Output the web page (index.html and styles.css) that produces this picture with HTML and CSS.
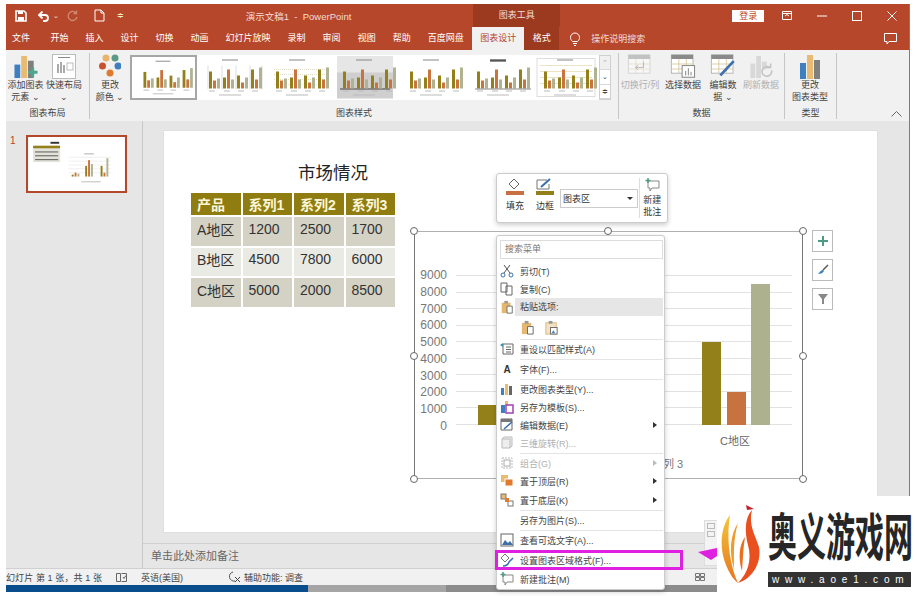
FILE: index.html
```html
<!DOCTYPE html>
<html lang="zh-CN">
<head>
  <meta charset="UTF-8">
  <title>演示文稿1 - PowerPoint</title>
  <link rel="stylesheet" href="styles.css">
</head>
<body>

  <!-- shared drawings -->
  <svg class="defs" width="0" height="0">
    <symbol id="bars" viewBox="0 0 67 44">
      <g fill="#94801a"><rect x="12" y="16" width="3" height="17"/><rect x="26" y="22" width="3" height="11"/><rect x="40" y="20" width="3" height="13"/><rect x="54" y="14" width="3" height="19"/></g>
      <g fill="#c9743f"><rect x="16" y="25" width="3" height="8"/><rect x="30" y="14" width="3" height="19"/><rect x="44" y="27" width="3" height="6"/><rect x="58" y="24" width="3" height="9"/></g>
      <g fill="#b0b391"><rect x="20" y="23" width="3" height="10"/><rect x="34" y="24" width="3" height="9"/><rect x="48" y="22" width="3" height="11"/><rect x="62" y="12" width="3" height="21"/></g>
      <rect x="25" y="4" width="16" height="1" fill="#888"/>
      <g fill="#bbb"><rect x="12" y="35" width="6" height="1"/><rect x="27" y="35" width="6" height="1"/><rect x="41" y="35" width="6" height="1"/><rect x="55" y="35" width="6" height="1"/><rect x="22" y="39" width="22" height="1"/></g>
    </symbol>
    <symbol id="clip" viewBox="0 0 16 16">
      <rect x="2" y="3" width="10" height="12" fill="#e4b871"/><rect x="5" y="1" width="4" height="3" fill="#999"/><path d="M8 7h6v8H8z" fill="#fff" stroke="#666"/>
    </symbol>
    <symbol id="grid-doc" viewBox="0 0 30 30">
      <rect x="1" y="1" width="26" height="22" fill="#fff" stroke="#aaa"/><rect x="1" y="1" width="26" height="5" fill="#8a8a8a"/>
      <path d="M1 12h26M1 18h26M10 6v17M19 6v17" stroke="#d8c79a" fill="none"/>
    </symbol>
  </svg>

  <div class="window">
    <div class="titlebar">
      <div class="qat">
        <svg width="12" height="12" viewBox="0 0 12 12"><path d="M1 1h8l2 2v8H1z" fill="none" stroke="#fff" stroke-width="1.6"/><rect x="3" y="1" width="5" height="3" fill="#fff"/><rect x="3" y="7" width="6" height="4" fill="#fff"/></svg>
        <svg class="undo" width="13" height="12" viewBox="0 0 13 12"><path d="M3 5h5a3 3 0 0 1 0 6H6M5.5 1.5 2 5l3.5 3.500" fill="none" stroke="#fff" stroke-width="1.8"/></svg>
        <span class="qat-caret">⌄</span>
        <svg class="redo" width="12" height="12" viewBox="0 0 12 12"><path d="M9 3a4.500 4.500 0 1 0 1 4M9.5 .5v3h-3" fill="none" stroke="#cf8a75" stroke-width="1.3"/></svg>
        <svg class="newdoc" width="11" height="13" viewBox="0 0 11 13"><path d="M1 1h6l3 3v8H1zM7 1v3h3" fill="none" stroke="#fff"/></svg>
        <span class="qat-more">≑</span>
      </div>
      <div class="doc-title">演示文稿1&nbsp; - &nbsp;PowerPoint</div>
      <div class="ctx-label">图表工具</div>
      <button class="login">登录</button>
      <div class="winbtn"><svg width="10" height="9" viewBox="0 0 10 9"><path d="M.5.5h9v8h-9zM.5 2.500h9M3 5l2-1.500L7 5" fill="none" stroke="#fff"/></svg></div>
      <div class="winbtn"><svg width="10" height="10" viewBox="0 0 10 10"><path d="M0 5h10" stroke="#fff"/></svg></div>
      <div class="winbtn"><svg width="10" height="10" viewBox="0 0 10 10"><rect x=".5" y=".5" width="9" height="9" fill="none" stroke="#fff"/></svg></div>
      <div class="winbtn"><svg width="10" height="10" viewBox="0 0 10 10"><path d="M.5.5l9 9M9.5.5l-9 9" stroke="#fff"/></svg></div>
    </div>

    <nav class="tabs">
      <a class="tab tab-file">文件</a>
      <a class="tab">开始</a><a class="tab">插入</a><a class="tab">设计</a><a class="tab">切换</a><a class="tab">动画</a>
      <a class="tab">幻灯片放映</a><a class="tab">录制</a><a class="tab">审阅</a><a class="tab">视图</a><a class="tab">帮助</a>
      <a class="tab">百度网盘</a>
      <a class="tab tab-active">图表设计</a>
      <a class="tab tab-ctx">格式</a>
      <svg class="bulb" width="12" height="14" viewBox="0 0 12 14"><path d="M3.5 9.5C2 8 1.5 7 1.5 5.500a4.500 4.500 0 0 1 9 0c0 1.500-.5 2.500-2 4zM4 11.500h4M5 13.500h2" fill="none" stroke="#fff"/></svg>
      <span class="tell">操作说明搜索</span>
      <svg class="comment" width="13" height="12" viewBox="0 0 13 12"><path d="M.5.5h12v8H5L3 11V8.500H.5z" fill="none" stroke="#fff"/></svg>
    </nav>

    <div class="ribbon">
      <section class="group group-layout">
        <div class="group-body">
          <div class="rb rb-add">
            <svg width="26" height="26" viewBox="0 0 26 26"><rect x="1" y="11" width="6" height="14" fill="#3f7fbf"/><rect x="8" y="2" width="6" height="23" fill="#e9bb72"/><rect x="15" y="7" width="6" height="18" fill="#7f7f7f"/><path d="M20 14v10M15 19h10" stroke="#4fa58e" stroke-width="3"/></svg>
            <span>添加图表<br>元素 ⌄</span>
          </div>
          <div class="rb rb-quick">
            <svg width="24" height="25" viewBox="0 0 24 25"><rect x=".5" y=".5" width="23" height="24" fill="#fff" stroke="#bbb"/><rect x="6" y="3" width="12" height="1" fill="#888"/><g fill="#aaa"><rect x="5" y="10" width="2" height="9"/><rect x="8" y="8" width="2" height="11"/><rect x="11" y="11" width="2" height="8"/></g><rect x="15" y="9" width="6" height="7" fill="none" stroke="#bbb"/></svg>
            <span>快速布局<br>⌄</span>
          </div>
        </div>
        <h4>图表布局</h4>
      </section>

      <section class="group group-styles">
        <div class="group-body">
          <div class="rb rb-color">
            <svg width="22" height="25" viewBox="0 0 22 25"><circle cx="7" cy="4" r="3.5" fill="#e8b36a"/><circle cx="16" cy="4" r="3.5" fill="#5a9a86"/><circle cx="3.5" cy="12" r="3.5" fill="#c9512f"/><circle cx="19" cy="12" r="3.5" fill="#3f7fbf"/><circle cx="11" cy="19" r="3.5" fill="#e07a2e"/></svg>
            <span>更改<br>颜色 ⌄</span>
          </div>
          <div class="gallery">
            <svg class="thumb thumb-on" viewBox="0 0 67 44"><use href="#bars"/></svg>
            <svg class="thumb" viewBox="0 0 67 44"><path d="M11 10v24M25 10v24M39 10v24M53 10v24M65 10v24" stroke="#ddd" fill="none"/><use href="#bars"/></svg>
            <svg class="thumb" viewBox="0 0 67 44"><path d="M10 14h56M10 19h56M10 24h56M10 29h56" stroke="#e4e0c8" stroke-dasharray="1 1" fill="none"/><use href="#bars"/></svg>
            <svg class="thumb" viewBox="0 0 67 44"><rect x="6" y="1" width="56" height="42" fill="#cfcfcf"/><rect x="6" y="1" width="56" height="16" fill="#e6e6e6"/><rect x="9" y="33" width="50" height="1" fill="#444"/><use href="#bars"/></svg>
            <svg class="thumb" viewBox="0 0 67 44"><use href="#bars"/></svg>
            <svg class="thumb" viewBox="0 0 67 44"><rect x="25" y="4" width="16" height="2" fill="#222"/><use href="#bars"/><rect x="10" y="33" width="56" height="1" fill="#888"/></svg>
            <svg class="thumb" viewBox="0 0 67 44"><rect x="5" y="3" width="58" height="38" fill="#fff" stroke="#ddd"/><path d="M8 10h52M8 16h52M8 22h52M8 28h52" stroke="#ece3c4" fill="none"/><use href="#bars"/></svg>
            <div class="gallery-scroll"><span class="off">⌃</span><span>⌄</span><span>≑</span></div>
          </div>
        </div>
        <h4>图表样式</h4>
      </section>

      <section class="group group-data">
        <div class="group-body">
          <div class="rb rb-dis rb-switch">
            <svg width="28" height="26" viewBox="0 0 30 28" opacity=".45"><use href="#grid-doc"/><path d="M10 15h9M13 12l-3 3 3 3M19 9v6" fill="none" stroke="#666"/></svg>
            <span>切换行/列</span>
          </div>
          <div class="rb rb-select">
            <svg width="28" height="26" viewBox="0 0 30 28"><use href="#grid-doc"/><rect x="14" y="13" width="14" height="13" fill="#fff" stroke="#777"/><path d="M18 24v-5M21 24v-8M24 24v-4" stroke="#777"/></svg>
            <span>选择数据</span>
          </div>
          <div class="rb rb-edit">
            <svg width="28" height="26" viewBox="0 0 30 28"><use href="#grid-doc"/><path d="M12 24 27 8" stroke="#3a6fb0" stroke-width="3"/></svg>
            <span>编辑数<br>据 ⌄</span>
          </div>
          <div class="rb rb-dis rb-refresh">
            <svg width="26" height="26" viewBox="0 0 26 26" opacity=".45"><rect x="2" y="10" width="5" height="15" fill="#bbb"/><rect x="8" y="2" width="5" height="23" fill="#bbb"/><rect x="14" y="8" width="5" height="8" fill="#bbb"/><path d="M24 17a5 5 0 1 1-2-3M23 10v4h-4" fill="none" stroke="#888" stroke-width="1.5"/></svg>
            <span>刷新数据</span>
          </div>
        </div>
        <h4>数据</h4>
      </section>

      <section class="group group-type">
        <div class="group-body">
          <div class="rb rb-type">
            <svg width="22" height="25" viewBox="0 0 22 25"><rect x="1" y="9" width="6" height="16" fill="#3f7fbf"/><rect x="8" y="1" width="6" height="24" fill="#e9bb72"/><rect x="15" y="6" width="6" height="19" fill="#7f7f7f"/></svg>
            <span>更改<br>图表类型</span>
          </div>
        </div>
        <h4>类型</h4>
      </section>

      <svg class="collapse" width="11" height="6" viewBox="0 0 11 6"><path d="M.5 5.500 5.500.5l5 5" fill="none" stroke="#666"/></svg>
    </div>

    <div class="workarea">
      <aside class="slides">
        <span class="slide-no">1</span>
        <svg class="slide-thumb" viewBox="0 0 100 56">
          <rect width="100" height="56" fill="#fff"/>
          <rect x="23" y="5" width="9" height="2" fill="#333"/>
          <rect x="5" y="9" width="28" height="3" fill="#94801a"/>
          <rect x="5" y="12" width="28" height="14" fill="#e4e3da"/>
          <g fill="#555"><rect x="7" y="15" width="24" height="1"/><rect x="7" y="19" width="24" height="1"/><rect x="7" y="23" width="24" height="1"/></g>
          <rect x="58" y="17" width="10" height="1" fill="#aaa"/>
          <path d="M42 21h44M42 25h44M42 29h44M42 33h44M42 37h44" stroke="#eee"/>
          <g fill="#94801a"><rect x="45" y="39" width="2" height="2"/><rect x="59" y="30" width="2" height="11"/><rect x="75" y="30" width="2" height="11"/></g>
          <g fill="#c9743f"><rect x="48" y="37" width="2" height="4"/><rect x="62" y="24" width="2" height="17"/><rect x="78" y="37" width="2" height="4"/></g>
          <g fill="#b0b391"><rect x="51" y="38" width="2" height="3"/><rect x="65" y="28" width="2" height="13"/><rect x="81" y="22" width="2" height="19"/></g>
          <rect x="55" y="46" width="20" height="1" fill="#bbb"/>
        </svg>
      </aside>

      <div class="stage">
        <div class="canvas">
          <div class="slide">
            <h2 class="slide-title">市场情况</h2>
            <table class="data-table">
              <tr><th>产品</th><th>系列1</th><th>系列2</th><th>系列3</th></tr>
              <tr class="odd"><td>A地区</td><td>1200</td><td>2500</td><td>1700</td></tr>
              <tr class="even"><td>B地区</td><td>4500</td><td>7800</td><td>6000</td></tr>
              <tr class="odd"><td>C地区</td><td>5000</td><td>2000</td><td>8500</td></tr>
            </table>

            <div class="chart">
              <div class="axis"><span>9000</span><span>8000</span><span>7000</span><span>6000</span><span>5000</span><span>4000</span><span>3000</span><span>2000</span><span>1000</span><span>0</span></div>
              <div class="plot">
                <div class="gridlines"><i></i><i></i><i></i><i></i><i></i><i></i><i></i><i></i><i></i><i></i></div>
                <div class="clusters">
                  <div class="cluster"><b class="s1" style="height:20px"></b><b class="s2" style="height:41px"></b><b class="s3" style="height:28px"></b></div>
                  <div class="cluster"><b class="s1" style="height:75px"></b><b class="s2" style="height:129px"></b><b class="s3" style="height:99px"></b></div>
                  <div class="cluster"><b class="s1" style="height:83px"></b><b class="s2" style="height:33px"></b><b class="s3" style="height:141px"></b></div>
                </div>
              </div>
              <span class="cat-label">C地区</span>
              <span class="legend">系列 3</span>
              <i class="handle h-tl"></i><i class="handle h-tc"></i><i class="handle h-tr"></i>
              <i class="handle h-ml"></i><i class="handle h-mr"></i>
              <i class="handle h-bl"></i><i class="handle h-bc"></i><i class="handle h-br"></i>
            </div>

            <div class="chart-tools">
              <div class="chart-tool"><svg width="12" height="12" viewBox="0 0 12 12"><path d="M6 1v10M1 6h10" stroke="#4f9a85" stroke-width="2"/></svg></div>
              <div class="chart-tool"><svg width="12" height="12" viewBox="0 0 12 12"><path d="M11 1 6 6" stroke="#555" stroke-width="1.5"/><path d="M6 6c-2 0-3 2-5 4 3 0 5-1 6-3z" fill="#3f7fbf"/></svg></div>
              <div class="chart-tool"><svg width="12" height="12" viewBox="0 0 12 12"><path d="M1 1h10L7 6v5H5V6z" fill="#888"/></svg></div>
            </div>
          </div>
        </div>
        <div class="notes">单击此处添加备注</div>
      </div>
    </div>

    <footer class="status">
      <span class="st-page">幻灯片 第 1 张，共 1 张</span>
      <svg class="st-icon" width="11" height="9" viewBox="0 0 11 9"><path d="M.5.5h4v8h-4zM5.5.5h5v8h-5M7 4l1 1.500L10 2.500" fill="none" stroke="#666"/></svg>
      <span class="st-lang">英语(美国)</span>
      <svg class="st-access" width="13" height="12" viewBox="0 0 13 12"><path d="M5 1a4.500 4.500 0 1 0 2 9" fill="none" stroke="#555"/><path d="M7 6l5 5M12 6l-5 5" stroke="#444"/></svg>
      <span>辅助功能: 调查</span>
      <svg class="st-view" width="10" height="8" viewBox="0 0 10 8"><path d="M.5.5h4v3h-4zM5.5.5h4v3h-4zM.5 4.500h4v3h-4zM5.500 4.500h4v3h-4z" fill="none" stroke="#777"/></svg>
    </footer>
    <div class="taskbar"></div>
  </div>

  <!-- mini toolbar -->
  <div class="mini">
    <div class="mini-btn">
      <svg width="18" height="18" viewBox="0 0 18 18"><path d="M8 1 3 6l5 5 5-5z" fill="#fff" stroke="#666"/><rect x="0" y="13" width="18" height="4" fill="#c8703f"/></svg>
      <span>填充</span>
    </div>
    <div class="mini-btn">
      <svg width="18" height="18" viewBox="0 0 18 18"><path d="M1 2h10M1 2v9h12V6" fill="none" stroke="#777"/><path d="M5 9 14 1" stroke="#3a6fb0" stroke-width="2"/><rect x="0" y="13" width="18" height="4" fill="#94801a"/></svg>
      <span>边框</span>
    </div>
    <div class="mini-combo"><span>图表区</span><i></i></div>
    <div class="mini-new">
      <svg width="15" height="14" viewBox="0 0 15 14"><path d="M3 3h11v7H7l-2 3v-3H3z" fill="#fff" stroke="#888"/><path d="M3 0v5M.5 2.500h5" stroke="#4f9a85" stroke-width="1.5"/></svg>
      <span>新建<br>批注</span>
    </div>
  </div>

  <!-- context menu -->
  <div class="menu">
    <div class="menu-search">搜索菜单</div>
    <div class="item"><svg width="14" height="14" viewBox="0 0 14 14"><path d="M4 1l6 8M10 1 4 9" stroke="#555"/><circle cx="3" cy="11" r="2" fill="none" stroke="#3f6fa8"/><circle cx="11" cy="11" r="2" fill="none" stroke="#3f6fa8"/></svg><span>剪切(T)</span></div>
    <div class="item"><svg width="14" height="14" viewBox="0 0 14 14"><path d="M1 1h6v9H1zM6 4h6v9H6z" fill="#fff" stroke="#666"/></svg><span>复制(C)</span></div>
    <div class="item item-head"><svg width="14" height="16" viewBox="0 0 16 16"><use href="#clip"/></svg><span>粘贴选项:</span></div>
    <div class="paste-row">
      <svg width="15" height="15" viewBox="0 0 16 16"><use href="#clip"/></svg>
      <svg width="15" height="15" viewBox="0 0 16 16"><rect x="2" y="3" width="11" height="12" fill="#f3e3c4" stroke="#d8b878"/><rect x="5" y="1" width="4" height="3" fill="#999"/><rect x="7" y="8" width="7" height="7" fill="#fff" stroke="#666"/><path d="M8 14l2-3 2 3" fill="#3f7fbf"/></svg>
    </div>
    <div class="sep"></div>
    <div class="item"><svg width="14" height="14" viewBox="0 0 14 14"><path d="M3 2h10v10H3zM6 5h5M6 7.500h5M6 10h5" fill="#fff" stroke="#666"/><path d="M0 3l3-2v4z" fill="#3f8fa8"/></svg><span>重设以匹配样式(A)</span></div>
    <div class="sep"></div>
    <div class="item"><span class="glyph">A</span><span>字体(F)...</span></div>
    <div class="sep"></div>
    <div class="item"><svg width="14" height="14" viewBox="0 0 14 14"><rect x="1" y="6" width="3" height="7" fill="#3f7fbf"/><rect x="5" y="2" width="3" height="11" fill="#e9bb72"/><rect x="9" y="4" width="3" height="9" fill="#666"/></svg><span>更改图表类型(Y)...</span></div>
    <div class="item"><svg width="14" height="14" viewBox="0 0 14 14"><rect x="1" y="5" width="4" height="8" fill="#3f7fbf"/><rect x="5" y="1" width="3" height="4" fill="#e9bb72"/><rect x="6" y="5" width="7" height="8" fill="#fff" stroke="#a040b0" stroke-width="1.5"/></svg><span>另存为模板(S)...</span></div>
    <div class="item has-sub"><svg width="14" height="14" viewBox="0 0 14 14"><path d="M1 1h11v11H1z" fill="#fff" stroke="#666"/><rect x="1" y="1" width="11" height="3" fill="#777"/><path d="M4 11l8-7" stroke="#3a6fb0" stroke-width="1.5"/></svg><span>编辑数据(E)</span></div>
    <div class="item item-off"><svg width="14" height="14" viewBox="0 0 14 14"><path d="M2 3h8v9H2zM2 3l2-2h8v9l-2 2" fill="#eee" stroke="#bbb"/></svg><span>三维旋转(R)...</span></div>
    <div class="sep"></div>
    <div class="item item-off has-sub"><svg width="14" height="14" viewBox="0 0 14 14"><path d="M2 2h10v10H2z" fill="none" stroke="#bbb" stroke-dasharray="2 1"/><rect x="4" y="4" width="6" height="6" fill="none" stroke="#aaa"/></svg><span>组合(G)</span></div>
    <div class="item has-sub"><svg width="14" height="14" viewBox="0 0 14 14"><rect x="1" y="1" width="7" height="7" fill="#e9bb72"/><rect x="5" y="5" width="8" height="7" fill="#e07a2e" stroke="#fff"/></svg><span>置于顶层(R)</span></div>
    <div class="item item-gap has-sub"><svg width="14" height="14" viewBox="0 0 14 14"><rect x="1" y="1" width="5" height="5" fill="#e9bb72" stroke="#777"/><rect x="8" y="8" width="5" height="5" fill="#fff" stroke="#777"/><rect x="5" y="5" width="4" height="4" fill="#e07a2e"/></svg><span>置于底层(K)</span></div>
    <div class="sep"></div>
    <div class="item"><span class="no-icon"></span><span>另存为图片(S)...</span></div>
    <div class="sep"></div>
    <div class="item"><svg width="14" height="14" viewBox="0 0 14 14"><rect x="1" y="1" width="12" height="12" fill="#fff" stroke="#666"/><path d="M2 12l3-5 3 3 2-2 3 4z" fill="#3f6fa8"/></svg><span>查看可选文字(A)...</span></div>
    <div class="sep"></div>
    <div class="item"><svg width="14" height="14" viewBox="0 0 14 14"><path d="M5 1 1 5l4 4 4-4z" fill="#fff" stroke="#777"/><path d="M3 13c3 0 5-1 6-4l4-4" fill="none" stroke="#3a6fb0" stroke-width="1.5"/></svg><span>设置图表区域格式(F)...</span></div>
    <div class="item item-last"><svg width="14" height="14" viewBox="0 0 14 14"><path d="M3 3h10v7H7l-2 3v-3H3z" fill="#fff" stroke="#888"/><path d="M3 0v5M.5 2.500h5" stroke="#4f9a85" stroke-width="1.5"/></svg><span>新建批注(M)</span></div>
  </div>
  <div class="highlight"></div>

  <!-- view buttons and arrow over the bottom right corner -->
  <div class="view-btns"><i></i><i></i></div>
  <svg class="arrow" width="20" height="14" viewBox="0 0 20 14"><path d="M0 5 19 1v8l-6 4z" fill="#e020e0"/></svg>

  <!-- site watermark -->
  <div class="watermark">
    <svg class="wm-logo" width="42" height="82" viewBox="0 0 42 82">
      <defs><linearGradient id="flame" x1="0" y1="0" x2="0" y2="1"><stop offset="0" stop-color="#f2c53a"/><stop offset="1" stop-color="#e8741f"/></linearGradient></defs>
      <path d="M32 5C28 20 36 32 39 42 42 58 32 74 18 78 28 68 32 55 28 40 25 28 24 14 32 5z" fill="#e8501f"/>
      <path d="M26 0l8 4-7 1z" fill="#c8202a"/>
      <path d="M10 10C2 20-2 40 6 60 10 70 14 75 18 78 10 60 6 35 10 10z" fill="url(#flame)"/>
      <path d="M18 18C10 30 9 48 14 64 14 50 13 34 18 18z" fill="#ef9a2c"/>
      <path d="M25 32C19 40 18 54 22 66 23 54 23 44 25 32z" fill="#e8701f"/>
    </svg>
    <div class="wm-text">
      <div class="wm-name">奥义游戏网</div>
      <div class="wm-url">www.aoe1.com</div>
    </div>
  </div>

</body>
</html>
```

FILE: styles.css
```css
* {
  margin: 0;
  padding: 0;
  box-sizing: border-box;
}

body {
  width: 917px;
  height: 596px;
  overflow: hidden;
  background-color: #fff;
  font-family: "Liberation Sans", "Noto Sans CJK SC", sans-serif;
  font-size: 9px;
  color: #444;
}

.defs {
  position: absolute;
}

.window {
  width: 904px;
  height: 588px;
  margin: 4px 0 0 6px;
  display: flex;
  flex-direction: column;
  background-color: #e6e6e6;
  border-right: 1px solid #c9604a;
}

/* title bar */
.titlebar {
  height: 23px;
  flex: none;
  display: flex;
  align-items: center;
  background-color: #b7472a;
  color: #f3dcd5;
}

.qat {
  width: 228px;
  height: 23px;
  display: flex;
  align-items: center;
  padding-left: 9px;
  color: #eec;
}

.undo { margin-left: 10px; }
.qat-caret { margin-left: 3px; font-size: 7px; line-height: 7px; }
.redo { margin-left: 8px; }
.newdoc { margin-left: 15px; }
.qat-more { margin-left: 12px; font-size: 8px; }

.doc-title {
  width: 130px;
  text-align: center;
  font-size: 9.5px;
  white-space: nowrap;
}

.ctx-label {
  width: 87px;
  height: 23px;
  margin-left: 110px;
  line-height: 22px;
  text-align: center;
  background-color: #9c3a20;
}

.login {
  width: 32px;
  height: 12px;
  margin-left: 172px;
  margin-right: 5px;
  border: none;
  background-color: #fff;
  color: #b7472a;
  font: 9px "Noto Sans CJK SC", sans-serif;
  line-height: 12px;
}

.winbtn {
  width: 35px;
  height: 23px;
  display: flex;
  align-items: center;
  justify-content: center;
}

/* tabs */
.tabs {
  height: 23px;
  flex: none;
  display: flex;
  align-items: center;
  background-color: #b7472a;
  color: #fff;
}

.tab {
  height: 23px;
  padding: 0 8.5px;
  line-height: 22px;
  white-space: nowrap;
}

.tab-file {
  width: 30px;
  padding: 0;
  margin-right: 6px;
  text-align: center;
}

.tab-active {
  width: 52px;
  padding: 0;
  text-align: center;
  background-color: #f1f1f1;
  color: #b7472a;
}

.tab-ctx {
  width: 35px;
  padding: 0;
  text-align: center;
  background-color: #9c3a20;
}

.bulb { margin-left: 10px; }

.tell {
  margin-left: 10px;
  color: #f3dcd5;
}

.comment { margin-left: auto; margin-right: 12px; }

/* ribbon */
.ribbon {
  height: 71px;
  flex: none;
  display: flex;
  position: relative;
  background-color: #f1f1f1;
  color: #444;
}

.group {
  display: flex;
  flex-direction: column;
  border-right: 1px solid #c6c6c6;
  margin: 3px 0 2px;
}

.group-layout { width: 84px; }
.group-styles { width: 529px; }
.group-data { width: 166px; }
.group-type { width: 52px; }

.group-body {
  height: 54px;
  display: flex;
}

.group h4 {
  flex: 1;
  text-align: center;
  font-size: 9px;
  font-weight: normal;
  line-height: 12px;
}

.rb {
  display: flex;
  flex-direction: column;
  align-items: center;
  text-align: center;
  line-height: 11.5px;
  white-space: nowrap;
}

.rb svg {
  height: 25px;
  flex: none;
  margin-top: 1px;
}

.rb span { margin-top: 1px; }
.rb-add { width: 39px; }
.rb-quick { width: 38px; }
.rb-color { width: 30px; margin: 0 5px; }
.rb-switch { width: 42px; }
.rb-select { width: 40px; margin-left: 2px; }
.rb-edit { width: 40px; }
.rb-refresh { width: 36px; }
.rb-type { width: 50px; }
.rb-dis { color: #b0b0b0; }

.gallery {
  display: flex;
  height: 45px;
  margin-top: 2px;
}

.thumb {
  width: 67px;
  height: 45px;
  display: block;
  background-color: #fff;
}

.thumb-on { border: 2px solid #a6a6a6; }

.gallery-scroll {
  width: 12px;
  display: flex;
  flex-direction: column;
  border: 1px solid #d0d0d0;
  background-color: #fff;
}

.gallery-scroll span {
  flex: 1;
  font-size: 7px;
  line-height: 13px;
  text-align: center;
  border-bottom: 1px solid #d8d8d8;
}

.gallery-scroll .off {
  color: #aaa;
  background-color: #f0f0f0;
}

.collapse {
  position: absolute;
  right: 7px;
  bottom: 4px;
}

/* work area */
.workarea {
  flex: 1;
  min-height: 0;
  display: flex;
}

.slides {
  width: 137px;
  flex: none;
  display: flex;
  align-items: flex-start;
  border-right: 1px solid #c8c8c8;
  padding-top: 14px;
}

.slide-no {
  width: 20px;
  padding-left: 4px;
  font-size: 10px;
  line-height: 11px;
  color: #b7472a;
}

.slide-thumb {
  width: 101px;
  height: 58px;
  border: 2px solid #b7472a;
}

.stage {
  flex: 1;
  display: flex;
  flex-direction: column;
}

.canvas {
  flex: 1;
  padding: 10px 32px 11px 21px;
  border-bottom: 1px solid #d0d0d0;
}

.slide {
  position: relative;
  width: 713px;
  height: 401px;
  background-color: #fff;
  box-shadow: 0 0 1px #bbb;
}

.slide-title {
  position: absolute;
  left: 134px;
  top: 30px;
  font-size: 17.5px;
  line-height: 24px;
  font-weight: normal;
  color: #222;
}

.data-table {
  position: absolute;
  left: 25px;
  top: 60px;
  width: 208px;
  table-layout: fixed;
  border-collapse: collapse;
  font-size: 14px;
  color: #333;
}

.data-table th,
.data-table td {
  border: 2px solid #fff;
  padding: 0 0 0 6px;
  text-align: left;
}

.data-table th {
  height: 24px;
  background-color: #8f7d12;
  color: #fdf7d8;
  font-weight: bold;
}

.data-table td {
  height: 30.5px;
  padding-bottom: 5px;
}

.odd td { background-color: #d3d2c5; }
.even td { background-color: #eaeae4; }

/* chart */
.chart {
  position: absolute;
  left: 250px;
  top: 100px;
  width: 389px;
  height: 248px;
  border: 1px solid #b0b0b0;
  border-left-color: #777;
  border-right-color: #777;
}

.axis {
  position: absolute;
  left: 4px;
  top: 36px;
  width: 28px;
  height: 165px;
  display: flex;
  flex-direction: column;
  justify-content: space-between;
  text-align: right;
  font-size: 12px;
  line-height: 14px;
  color: #777;
}

.plot {
  position: absolute;
  left: 41px;
  top: 43px;
  width: 336px;
  height: 150px;
}

.gridlines {
  position: absolute;
  inset: 0;
  display: flex;
  flex-direction: column;
  justify-content: space-between;
}

.gridlines i {
  display: block;
  height: 1px;
  background-color: #e2e2e2;
}

.clusters {
  position: absolute;
  inset: 0;
  display: flex;
}

.cluster {
  flex: 1;
  display: flex;
  align-items: flex-end;
  justify-content: center;
  gap: 5.5px;
}

.cluster b {
  width: 19px;
  display: block;
}

.s1 { background-color: #94801a; }
.s2 { background-color: #c8733f; }
.s3 { background-color: #aeb18e; }

.cat-label {
  position: absolute;
  left: 305px;
  top: 202px;
  font-size: 11px;
  line-height: 14px;
  color: #666;
}

.legend {
  position: absolute;
  left: 237px;
  top: 225px;
  font-size: 11px;
  line-height: 14px;
  color: #777;
}

.handle {
  position: absolute;
  width: 8px;
  height: 8px;
  border: 1.5px solid #666;
  border-radius: 50%;
  background-color: #fff;
}

.h-tl { left: -5px; top: -5px; }
.h-tc { left: 189px; top: -5px; }
.h-tr { right: -5px; top: -5px; }
.h-ml { left: -5px; top: 120px; }
.h-mr { right: -5px; top: 120px; }
.h-bl { left: -5px; bottom: -5px; }
.h-bc { left: 189px; bottom: -5px; }
.h-br { right: -5px; bottom: -5px; }

.chart-tools {
  position: absolute;
  left: 648px;
  top: 99px;
  display: flex;
  flex-direction: column;
  gap: 7px;
}

.chart-tool {
  width: 21px;
  height: 22px;
  display: flex;
  align-items: center;
  justify-content: center;
  background-color: #fff;
  border: 1px solid #bbb;
}

.notes {
  height: 25px;
  flex: none;
  padding-left: 8px;
  font-size: 11px;
  line-height: 24px;
  color: #666;
}

/* status bar */
.status {
  height: 17px;
  flex: none;
  display: flex;
  align-items: center;
  background-color: #f1f1f1;
  border-top: 1px solid #d0d0d0;
  color: #444;
  white-space: nowrap;
}

.st-page { width: 110px; letter-spacing: .1px; }
.st-icon { margin-right: 14px; }
.st-lang { width: 49px; }
.st-access { margin: 0 3px 0 38px; }
.st-view { margin-left: 392px; }

.taskbar {
  height: 7px;
  flex: none;
  background: linear-gradient(to right, #0a4d8c 302px, #a5a5a5 302px, #a5a5a5 440px, #8c8c8c 440px);
}

/* mini toolbar */
.mini {
  position: absolute;
  left: 496px;
  top: 173px;
  width: 172px;
  height: 50px;
  display: flex;
  align-items: flex-start;
  padding: 4px 3px 0 9px;
  background-color: #fff;
  border: 1px solid #ccc;
  border-radius: 3px;
  box-shadow: 0 2px 5px rgba(0, 0, 0, 0.2);
  color: #333;
}

.mini-btn {
  width: 30px;
  flex: none;
  display: flex;
  flex-direction: column;
  align-items: flex-start;
  gap: 3px;
}

.mini-combo {
  width: 82px;
  height: 19px;
  margin: 11px 0 0 -6px;
  display: flex;
  align-items: center;
  justify-content: space-between;
  padding: 0 4px 0 2px;
  background-color: #fff;
  border: 1px solid #ccc;
}

.mini-combo i {
  border: 3px solid transparent;
  border-top: 3px solid #333;
  margin-top: 3px;
}

.mini-new {
  width: 26px;
  margin-left: 1px;
  display: flex;
  flex-direction: column;
  align-items: center;
  gap: 2px;
  line-height: 12px;
  text-align: center;
  border-left: 1px solid #ddd;
}

/* context menu */
.menu {
  position: absolute;
  left: 496px;
  top: 235px;
  width: 169px;
  height: 355px;
  padding: 4px 1px 0 3px;
  background-color: #fff;
  border: 1px solid #ccc;
  border-radius: 3px;
  box-shadow: 0 2px 5px rgba(0, 0, 0, 0.2);
  color: #444;
}

.menu-search {
  height: 19px;
  margin-bottom: 3px;
  padding-left: 4px;
  line-height: 17px;
  border: 1px solid #ddd;
  color: #777;
}

.item {
  height: 18px;
  display: flex;
  align-items: center;
  position: relative;
  white-space: nowrap;
}

.item svg,
.item .glyph,
.item .no-icon {
  width: 14px;
  margin-right: 6px;
  flex: none;
}

.glyph {
  text-align: center;
  font-size: 10px;
  font-weight: bold;
  color: #333;
}

.item-head span {
  align-self: stretch;
  flex: 1;
  line-height: 18px;
  margin-left: -5px;
  padding-left: 5px;
  background-color: #e6e6e6;
}

.item-off { color: #b0b0b0; }
.item-gap { margin-top: 1px; }
.item-last { margin-top: 1px; }

.has-sub::after {
  content: "";
  position: absolute;
  right: 6px;
  top: 6px;
  border: 3.5px solid transparent;
  border-left: 4px solid #333;
  border-right: 0;
}

.item-off.has-sub::after { border-left-color: #bbb; }

.paste-row {
  height: 22px;
  display: flex;
  align-items: center;
  gap: 9px;
  padding-left: 20px;
}

.sep {
  height: 2px;
  margin-left: 20px;
  border-bottom: 1px solid #e4e4e4;
}

.highlight {
  position: absolute;
  left: 495px;
  top: 550px;
  width: 188px;
  height: 20px;
  border: 3px solid #e020e0;
}

.view-btns {
  position: absolute;
  left: 704px;
  top: 520px;
  width: 13px;
  height: 46px;
  background-color: #f3f3f3;
  border: 1px solid #ddd;
  border-right: none;
  display: flex;
  flex-direction: column;
  gap: 2px;
  padding: 2px;
}

.view-btns i {
  height: 6px;
  border: 1px solid #bbb;
}

.arrow {
  position: absolute;
  left: 698px;
  top: 547px;
}

/* watermark */
.watermark {
  position: absolute;
  left: 717px;
  top: 496px;
  width: 200px;
  height: 100px;
  display: flex;
  background-color: #fff;
}

.wm-logo {
  margin: 9px 0 0 3px;
  flex: none;
}

.wm-text {
  margin: 13px 0 0 6px;
}

.wm-name {
  height: 53px;
  font-family: "Noto Sans CJK SC", sans-serif;
  font-size: 29px;
  font-weight: 700;
  line-height: 29px;
  color: #262626;
  white-space: nowrap;
  transform: scaleY(1.75);
  transform-origin: top;
}

.wm-url {
  width: 143px;
  height: 15px;
  margin-top: 10px;
  background-color: #333;
  color: #fff;
  font-size: 10px;
  line-height: 15px;
  letter-spacing: 5.8px;
  padding-left: 4px;
  white-space: nowrap;
}
```
